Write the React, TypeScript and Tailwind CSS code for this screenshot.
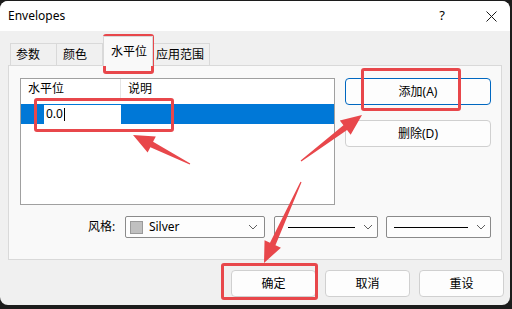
import React from 'react'

const font = { fontFamily: '"Noto Sans", "Noto Sans CJK SC", sans-serif' }

function Chevron() {
  return (
    <svg width="10" height="6" viewBox="0 0 10 6" className="shrink-0">
      <path d="M1 1 L5 5 L9 1" fill="none" stroke="#606060" strokeWidth="1" />
    </svg>
  )
}

function Arrow({ x1, y1, x2, y2 }: { x1: number; y1: number; x2: number; y2: number }) {
  const dx = x2 - x1
  const dy = y2 - y1
  const len = Math.hypot(dx, dy)
  const ux = dx / len
  const uy = dy / len
  const nx = -uy
  const ny = ux
  const head = 21
  const hw = 9
  const sw = 3
  const bx = x2 - ux * head
  const by = y2 - uy * head
  const pts = [
    [x1 + nx * 0.6, y1 + ny * 0.6],
    [bx + nx * sw, by + ny * sw],
    [bx + nx * hw, by + ny * hw],
    [x2, y2],
    [bx - nx * hw, by - ny * hw],
    [bx - nx * sw, by - ny * sw],
    [x1 - nx * 0.6, y1 - ny * 0.6],
  ]
  return <polygon points={pts.map((p) => p.join(',')).join(' ')} fill="#e8474b" />
}

export default function App() {
  return (
    <div className="relative w-[512px] h-[309px] bg-[#1c1c1c] pt-[1px] overflow-hidden text-[12px] text-black" style={font}>
      <div className="w-[510px] h-[304px] rounded-lg overflow-hidden bg-[#f0f0f0] flex flex-col">
        {/* title bar */}
        <div className="h-[30px] bg-white flex items-center pl-[8px] pr-[13px]">
          <span className="text-[12px]">Envelopes</span>
          <span className="ml-auto text-[13px] mr-[41px]">?</span>
          <svg width="11" height="11" viewBox="0 0 11 11">
            <path d="M0.5 0.5 L10.5 10.5 M10.5 0.5 L0.5 10.5" stroke="#1a1a1a" strokeWidth="1" />
          </svg>
        </div>

        <div className="px-[8px] pt-[4px]">
          {/* tabs */}
          <div className="flex items-end h-[30px] pl-[2px] text-[12px]">
            <div className="w-[47px] h-[22px] border border-[#d9d9d9] border-b-0 bg-[#f0f0f0] flex items-center pl-[5px]">参数</div>
            <div className="w-[46px] h-[22px] border border-[#d9d9d9] border-l-0 border-b-0 bg-[#f0f0f0] flex items-center pl-[6px]">颜色</div>
            <div className="w-[50px] h-[30px] border border-[#d9d9d9] border-b-0 bg-[#f9f9f9] flex items-start pt-[6px] pl-[7px] -mb-[1px] relative z-10">水平位</div>
            <div className="w-[57px] h-[22px] border border-[#d9d9d9] border-l-0 border-b-0 bg-[#f0f0f0] flex items-center pl-[3px]">应用范围</div>
          </div>

          {/* tab panel */}
          <div className="h-[195px] border border-[#d9d9d9] bg-[#f9f9f9] flex flex-col pt-[12px] pl-[11px] pr-[10px]">
            <div className="flex">
              <div className="w-[315px] h-[127px] border border-[#a0a0a0] bg-white">
                <div className="h-[19px] flex items-center">
                  <div className="w-[100px] pl-[7px] border-r border-[#e5e5e5] h-full flex items-center">水平位</div>
                  <div className="pl-[7px]">说明</div>
                </div>
                <div className="mt-[6px] h-[20px] bg-[#0078d7] flex items-center pl-[23px]">
                  <div className="w-[77px] h-[19px] bg-white flex items-center pl-[2px]">
                    0.0<span className="inline-block w-[1px] h-[13px] bg-black ml-[1px]" />
                  </div>
                </div>
              </div>
              <div className="ml-[10px] flex flex-col gap-[15px]">
                <button className="w-[146px] h-[27px] rounded-[4px] border border-[#0067c0] bg-[#fdfdfd] text-[12px]">添加(A)</button>
                <button className="w-[146px] h-[27px] rounded-[4px] border border-[#d0d0d0] bg-[#fdfdfd] text-[12px]">删除(D)</button>
              </div>
            </div>

            <div className="mt-[11px] flex items-center h-[22px]">
              <span className="ml-[68px] w-[37px]">风格:</span>
              <div className="w-[140px] h-[22px] border border-[#8a8a8a] rounded-[2px] bg-[#fdfdfd] flex items-center pl-[4px] pr-[6px]">
                <span className="w-[13px] h-[13px] bg-[#c0c0c0] border border-[#9a9a9a]" />
                <span className="ml-[6px]">Silver</span>
                <span className="ml-auto"><Chevron /></span>
              </div>
              <div className="ml-[9px] w-[105px] h-[22px] border border-[#8a8a8a] rounded-[2px] bg-[#fdfdfd] flex items-center pl-[13px] pr-[4px]">
                <span className="w-[67px] h-[1px] bg-black" />
                <span className="ml-auto"><Chevron /></span>
              </div>
              <div className="ml-[8px] w-[105px] h-[22px] border border-[#8a8a8a] rounded-[2px] bg-[#fdfdfd] flex items-center pl-[7px] pr-[4px]">
                <span className="w-[74px] h-[1px] bg-black" />
                <span className="ml-auto"><Chevron /></span>
              </div>
            </div>
          </div>

          {/* bottom buttons */}
          <div className="mt-[10px] flex justify-end gap-[9px] -mr-[2px]">
            <button className="w-[85px] h-[27px] rounded-[4px] border border-[#d0d0d0] bg-[#fdfdfd] text-[12px]">确定</button>
            <button className="w-[85px] h-[27px] rounded-[4px] border border-[#d0d0d0] bg-[#fdfdfd] text-[12px]">取消</button>
            <button className="w-[85px] h-[27px] rounded-[4px] border border-[#d0d0d0] bg-[#fdfdfd] text-[12px]">重设</button>
          </div>
        </div>
      </div>

      {/* annotation highlights */}
      <div className="absolute left-[103px] top-[34px] w-[51px] h-[40px] border-[3px] border-[#e8474b] rounded-[3px]" />
      <div className="absolute left-[34px] top-[98px] w-[140px] h-[34px] border-[3px] border-[#e8474b] rounded-[3px]" />
      <div className="absolute left-[361px] top-[68px] w-[100px] h-[43px] border-[3px] border-[#e8474b] rounded-[3px]" />
      <div className="absolute left-[221px] top-[263px] w-[97px] h-[37px] border-[3px] border-[#e8474b] rounded-[3px]" />
      <svg className="absolute left-0 top-0 pointer-events-none" width="512" height="309">
        <Arrow x1={190} y1={164} x2={133} y2={135} />
        <Arrow x1={301} y1={161} x2={362} y2={115} />
        <Arrow x1={301} y1={182} x2={264} y2={263} />
      </svg>
    </div>
  )
}
